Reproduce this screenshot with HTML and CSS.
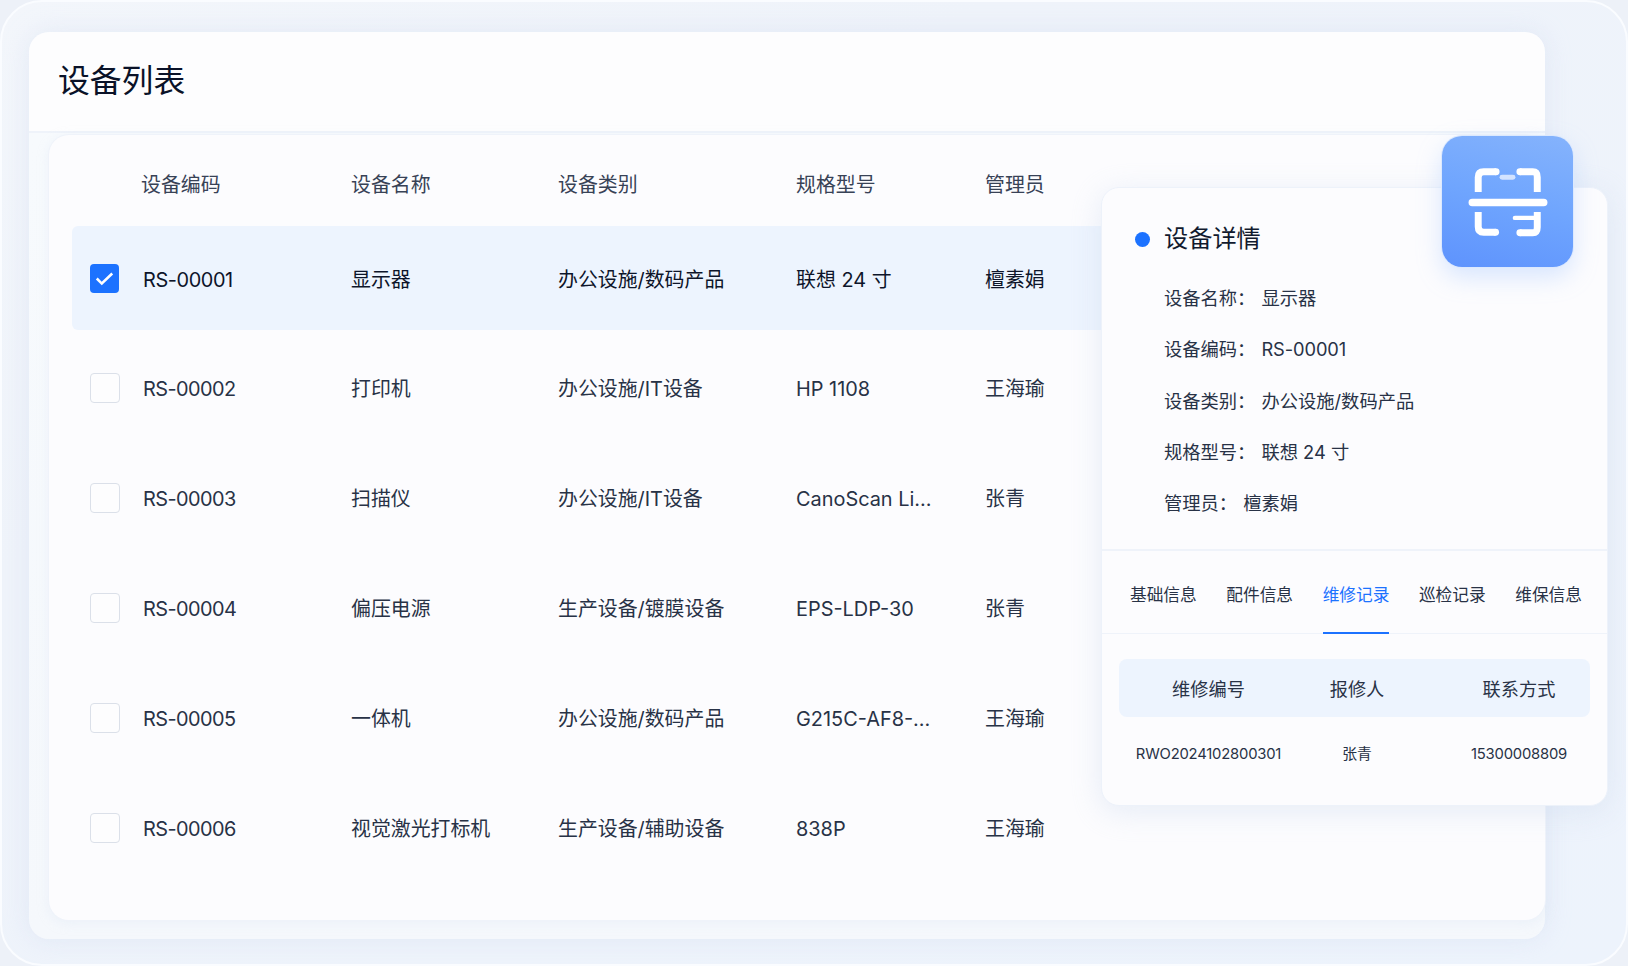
FILE: index.html
```html
<!DOCTYPE html>
<html lang="zh-CN">
<head>
    <meta charset="UTF-8">
    <title>设备列表</title>
    <link rel="stylesheet" href="styles.css">
</head>
<body>
    <div class="stage">
        <div class="card">
            <h1 class="card-title">设备列表</h1>
            <div class="table">
                <div class="row head">
                    <span></span><span>设备编码</span><span>设备名称</span><span>设备类别</span><span>规格型号</span><span>管理员</span>
                </div>
                <div class="row selected">
                    <span class="check checked"><svg width="29" height="29" viewBox="0 0 30 30"><path d="M7 15l5.2 5.2L23 9.8" fill="none" stroke="#fff" stroke-width="2.6"/></svg></span>
                    <span class="code">RS-00001</span><span>显示器</span><span>办公设施/数码产品</span><span>联想 24 寸</span><span>檀素娟</span>
                </div>
                <div class="row">
                    <span class="check"></span>
                    <span class="code">RS-00002</span><span>打印机</span><span>办公设施/IT设备</span><span class="model">HP 1108</span><span>王海瑜</span>
                </div>
                <div class="row">
                    <span class="check"></span>
                    <span class="code">RS-00003</span><span>扫描仪</span><span>办公设施/IT设备</span><span class="model">CanoScan Li...</span><span>张青</span>
                </div>
                <div class="row">
                    <span class="check"></span>
                    <span class="code">RS-00004</span><span>偏压电源</span><span>生产设备/镀膜设备</span><span class="model">EPS-LDP-30</span><span>张青</span>
                </div>
                <div class="row">
                    <span class="check"></span>
                    <span class="code">RS-00005</span><span>一体机</span><span>办公设施/数码产品</span><span class="model">G215C-AF8-...</span><span>王海瑜</span>
                </div>
                <div class="row">
                    <span class="check"></span>
                    <span class="code">RS-00006</span><span>视觉激光打标机</span><span>生产设备/辅助设备</span><span class="model">838P</span><span>王海瑜</span>
                </div>
            </div>
        </div>

        <!-- detail panel floats over the list -->
        <div class="detail">
            <div class="info">
                <h2 class="detail-title">设备详情</h2>
                <p>设备名称：<span>显示器</span></p>
                <p>设备编码：<span class="info-code">RS-00001</span></p>
                <p>设备类别：<span>办公设施/数码产品</span></p>
                <p>规格型号：<span>联想 24 寸</span></p>
                <p>管理员：<span>檀素娟</span></p>
            </div>
            <div class="tabs">
                <span>基础信息</span>
                <span>配件信息</span>
                <span class="active">维修记录</span>
                <span>巡检记录</span>
                <span>维保信息</span>
            </div>
            <div class="record record-head"><span>维修编号</span><span>报修人</span><span>联系方式</span></div>
            <div class="record"><span class="num">RWO2024102800301</span><span>张青</span><span class="num">15300008809</span></div>
        </div>

        <div class="scan">
            <svg width="131" height="131" viewBox="0 0 132 132">
                <g fill="none" stroke="#fff" stroke-width="7" stroke-linejoin="round">
                    <path d="M36.500 56.500V41.500q0-5.500 5.500-5.500h12.500"/>
                    <path d="M78.500 36h13q4.500 0 4.500 5.500v15"/>
                    <path d="M36.500 76.500v15q0 5.500 5.500 5.500h12"/>
                    <path d="M78.500 97.500h13q4.500 0 4.500-5.500V76.500"/>
                    <path d="M30.500 67h72" stroke-width="7.500" stroke-linecap="round"/>
                    <path d="M73.500 82.500h21" stroke-width="4.500" stroke-linecap="round"/>
                </g>
                <g fill="#fff">
                    <circle cx="54.500" cy="36" r="3.500"/>
                    <circle cx="78.500" cy="36" r="3.500"/>
                    <circle cx="54" cy="97" r="3.500"/>
                    <circle cx="78.500" cy="97.500" r="3.500"/>
                </g>
                <rect x="58" y="39" width="16" height="5" rx="2.500" fill="#d3e3ff"/>
            </svg>
        </div>
    </div>
</body>
</html>
```
FILE: styles.css
```css
* {
    box-sizing: border-box;
}
body {
    margin: 0;
    background-color: #edf1f8;
    color: #283246;
    font-family: Inter, "Noto Sans CJK SC", sans-serif;
    font-size: 19.9px;
}
h1, h2, p {
    margin: 0;
    font-weight: 400;
}
.stage {
    position: relative;
    width: 1628px;
    height: 966px;
    padding: 30px 81px 25px 27px;
    border: 2px solid #fafcff;
    border-radius: 42px;
    background: linear-gradient(150deg, #f3f6fb 0%, #eff3fa 30%, #edf3fc 100%);
    overflow: hidden;
}
.card {
    height: 907px;
    border-radius: 20px;
    background: linear-gradient(#fdfdfe 100px, #f7fafd 101px, #f5f8fc);
    box-shadow: 0 0 24px rgba(205, 218, 240, 0.4);
}
.card-title {
    height: 101px;
    padding-left: 29px;
    border-bottom: 2px solid #eff3fa;
    color: #0a1228;
    font-size: 31.800px;
    line-height: 97px;
}

/* device table */
.table {
    height: 785px;
    margin: 2px 0 0 20px;
    padding-left: 23px;
    border-radius: 20px;
    background-color: #fcfcfe;
    box-shadow: 0 0 0 1px #eff3fa, 0 3px 12px rgba(215, 226, 243, 0.35);
}
.row {
    display: grid;
    grid-template-columns: 51px 210px 207px 238px 189px 1fr;
    align-items: center;
    height: 110px;
    padding-left: 18px;
    white-space: nowrap;
}
.row.head {
    height: 91px;
    padding-top: 8px;
    line-height: 30px;
    color: #384256;
}
.row.selected {
    height: 104px;
    margin-bottom: 2px;
    border-radius: 6px;
    background-color: #edf4fe;
    color: #0d152a;
}
.code {
    padding: 3px 0 0 2px;
    letter-spacing: -0.55px;
}
.selected .code {
    letter-spacing: -0.4px;
}
.model {
    padding-top: 3px;
}
.check {
    width: 30px;
    height: 30px;
    margin-top: 1px;
    border: 1px solid #dbe0e9;
    border-radius: 4px;
    background-color: #fdfdfe;
}
.checked {
    width: 29px;
    height: 29px;
    border: none;
    background-color: #1c72ff;
}
.checked svg {
    display: block;
}

/* detail panel */
.detail {
    position: absolute;
    left: 1099px;
    top: 185px;
    width: 507px;
    height: 619px;
    border: 1px solid #edf2fa;
    border-radius: 18px;
    background-color: #fcfcfe;
    box-shadow: 0 6px 30px rgba(205, 217, 238, 0.45);
    font-size: 18.300px;
}
.info {
    height: 363px;
    padding: 26px 0 0 62px;
    border-bottom: 2px solid #eff3fa;
}
.detail-title {
    display: flex;
    align-items: center;
    height: 50px;
    margin: 0 0 9px -29px;
    color: #111a2e;
    font-size: 24.200px;
    line-height: 44px;
}
.detail-title::before {
    content: "";
    width: 15px;
    height: 15px;
    margin-right: 14px;
    border-radius: 50%;
    background-color: #1c72ff;
}
.info p {
    height: 51.300px;
    line-height: 51.800px;
}
.info p span {
    margin-left: 6px;
}
.info-code {
    letter-spacing: -0.1px;
}
.tabs {
    display: flex;
    justify-content: space-between;
    height: 83px;
    padding: 0 25px 0 28px;
    border-bottom: 1px solid #eff3fa;
    font-size: 16.700px;
    line-height: 89px;
}
.tabs .active {
    height: 83px;
    border-bottom: 2px solid #1c72ff;
    color: #1c72ff;
}
.record {
    display: grid;
    grid-template-columns: 179px 118px 1fr;
    align-items: center;
    height: 71px;
    margin: 0 17px;
    text-align: center;
    font-size: 14.800px;
}
.record span:last-child {
    padding-left: 32px;
}
.record-head {
    height: 58px;
    margin-top: 25px;
    border-radius: 8px;
    background-color: #edf4fe;
    font-size: 18.200px;
}
.record .num {
    padding-top: 2px;
    letter-spacing: -0.2px;
}

/* scan tile */
.scan {
    position: absolute;
    left: 1440px;
    top: 134px;
    width: 131px;
    height: 131px;
    border-radius: 20px;
    background: linear-gradient(15deg, #5e93fd, #6fa5fe 50%, #85b3fc);
    box-shadow: 0 0 0 1px #dce9fe, 0 10px 24px rgba(150, 190, 255, 0.35);
}
```
